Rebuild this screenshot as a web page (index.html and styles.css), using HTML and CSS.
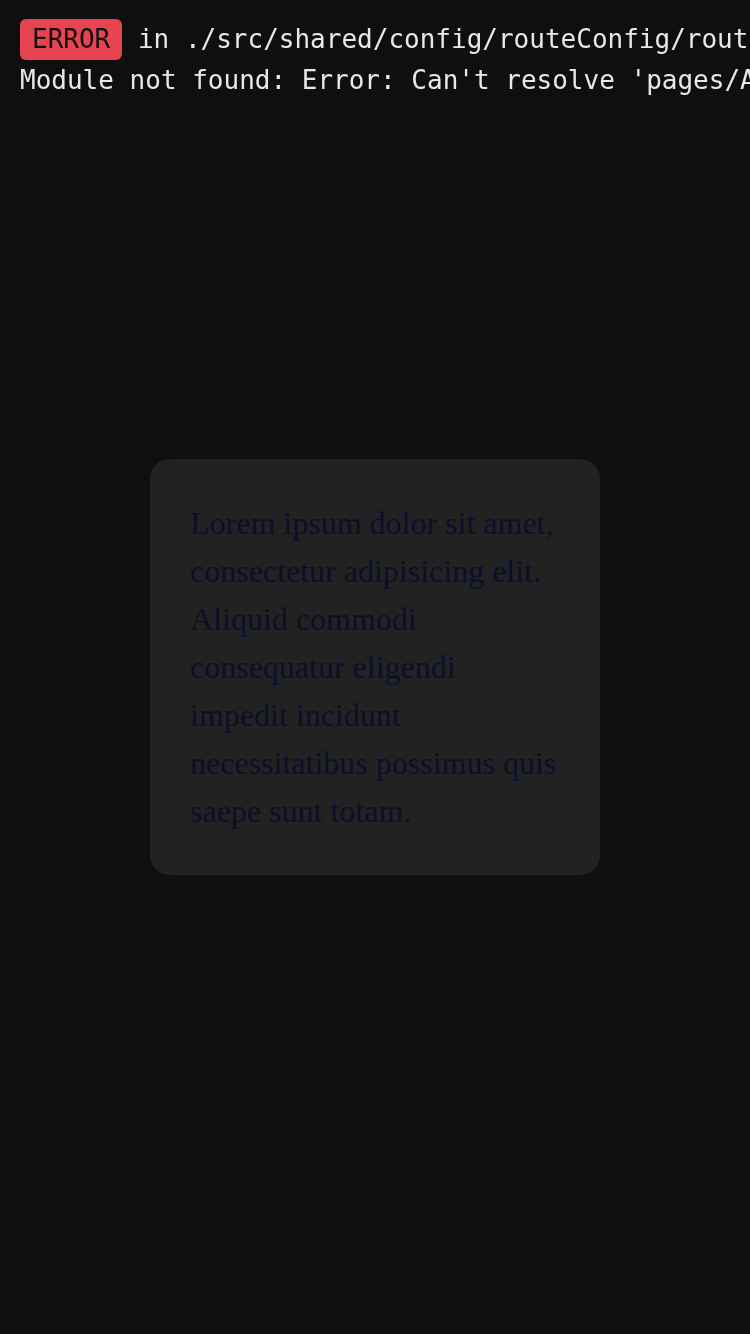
FILE: index.html
```html
<!DOCTYPE html>
<html>
<head>
<meta charset="utf-8">
<link rel="stylesheet" href="styles.css">
</head>
<body>
<main class="page">
  <div class="card">
    <p class="card-text">Lorem ipsum dolor sit amet, consectetur adipisicing elit. Aliquid commodi consequatur eligendi impedit incidunt necessitatibus possimus quis saepe sunt totam.</p>
  </div>
</main>
<div class="overlay">
  <div class="err-line"><span class="badge">ERROR</span> in ./src/shared/config/routeConfig/routeConfig.tsx 5:0-44</div>
  <div class="err-line">Module not found: Error: Can't resolve 'pages/AboutPage' in '/src/shared/config/routeConfig'</div>
</div>
</body>
</html>
```
FILE: styles.css
```css
html, body {
  margin: 0;
  padding: 0;
  width: 750px;
  height: 1334px;
  overflow: hidden;
  background: #0f0f0f;
}
.page {
  height: 1334px;
  display: flex;
  align-items: center;
  justify-content: center;
}
.card {
  width: 450px;
  box-sizing: border-box;
  padding: 40px 40px;
  background: #222222;
  border-radius: 20px;
}
.card-text {
  margin: 0;
  font-family: "Liberation Serif", "Times New Roman", serif;
  font-size: 32px;
  line-height: 48px;
  color: #0a0f2a;
}
.overlay {
  position: fixed;
  inset: 0;
  padding: 19px 0 0 20px;
  font-family: "DejaVu Sans Mono", Menlo, monospace;
  font-size: 26px;
  line-height: 41px;
  color: #e8e8e8;
  overflow: hidden;
}
.err-line {
  white-space: pre;
  height: 41px;
}
.badge {
  display: inline-block;
  background: #e8444f;
  color: #111;
  border-radius: 6px;
  padding: 0 12px;
  height: 41px;
  vertical-align: top;
}
```
